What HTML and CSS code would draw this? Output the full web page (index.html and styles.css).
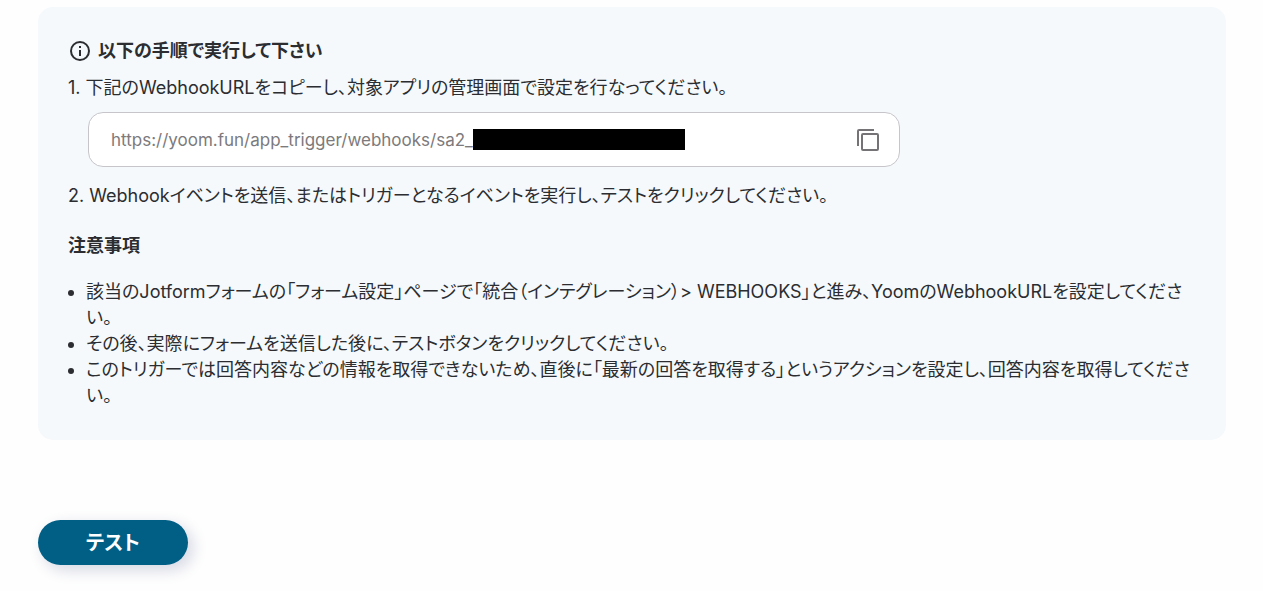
FILE: index.html
```html
<!DOCTYPE html>
<html lang="ja">
<head>
<meta charset="utf-8">
<title>Webhook</title>
<link rel="stylesheet" href="styles.css">
</head>
<body>
<main class="page">
  <section class="panel">
    <h2 class="panel-title">
      <svg class="info-icon" viewBox="0 0 24 24" aria-hidden="true"><circle class="info-ring" cx="12" cy="12" r="9"/><path d="M11 7h2v2h-2zM11 11h2v6h-2z"/></svg>
      以下の手順で実行して下さい
    </h2>
    <label class="step" for="webhook-url">1. 下記のWebhookURLをコピーし、対象アプリの管理画面で設定を行なってください。</label>
    <div class="url-field">
      <input class="url-input" id="webhook-url" type="text" readonly value="https://yoom.fun/app_trigger/webhooks/sa2_">
      <span class="redaction"></span>
      <button class="copy-button" type="button" aria-label="コピー">
        <svg class="copy-icon" viewBox="0 0 22 22" aria-hidden="true"><path d="M1 17V2Q1 1 2 1H17"/><rect x="5" y="5" width="16" height="16" rx="1"/></svg>
      </button>
    </div>
    <p class="step">2. Webhookイベントを送信、またはトリガーとなるイベントを実行し、テストをクリックしてください。</p>
    <h3 class="notes-title">注意事項</h3>
    <ul class="notes">
      <li>該当のJotformフォームの「フォーム設定」ページで「統合（インテグレーション）&gt; WEBHOOKS」と進み、YoomのWebhookURLを設定してください。</li>
      <li>その後、実際にフォームを送信した後に、テストボタンをクリックしてください。</li>
      <li>このトリガーでは回答内容などの情報を取得できないため、直後に「最新の回答を取得する」というアクションを設定し、回答内容を取得してください。</li>
    </ul>
  </section>
  <button class="test-button" type="button">テスト</button>
</main>
</body>
</html>
```
FILE: styles.css
```css
* { box-sizing: border-box; }
body {
  margin: 0;
  background: #fefefe;
  color: #2b2d30;
  font-family: Inter, "Noto Sans CJK JP", sans-serif;
  font-size: 18px;
  line-height: 26px;
  font-feature-settings: "palt";
}
.page { padding: 7px 37px 26px 38px; }
.panel {
  padding: 31px 30px;
  border-radius: 15px;
  background: #f5f9fc;
}
.panel-title {
  display: flex;
  align-items: center;
  gap: 6px;
  margin: 0 0 11px;
  font-size: 18px;
  font-weight: 700;
}
.info-icon { width: 24px; height: 24px; fill: currentColor; }
.info-ring { fill: none; stroke: currentColor; stroke-width: 2; }
.step { display: block; margin: 0; }
.url-field {
  display: flex;
  align-items: center;
  width: 72%;
  height: 55px;
  margin: 11px 0 16px 20px;
  padding: 0 20px 0 22px;
  border: 1px solid #c7c5ca;
  border-radius: 15px;
  background: #fff;
}
.url-input {
  field-sizing: content;
  padding: 0;
  border: 0;
  outline: 0;
  background: transparent;
  color: #7c7a7c;
  font: inherit;
  font-size: 17px;
}
.redaction { width: 212px; height: 21px; background: #000; }
.copy-button {
  display: flex;
  margin-left: auto;
  padding: 0;
  border: 0;
  background: transparent;
  color: #757376;
}
.copy-icon { width: 22px; height: 22px; fill: none; stroke: currentColor; stroke-width: 2; }
.notes-title { margin: 24px 0 20px; font-size: 18px; font-weight: 700; }
.notes { margin: 0; padding-left: 18px; }
.test-button {
  display: block;
  width: 150px;
  height: 45px;
  margin-top: 80px;
  padding: 0;
  border: 0;
  border-radius: 24px;
  background: #015f86;
  color: #fff;
  font: inherit;
  font-size: 20px;
  font-weight: 700;
  box-shadow: 5px 5px 15px #d5d7e3;
}
```
